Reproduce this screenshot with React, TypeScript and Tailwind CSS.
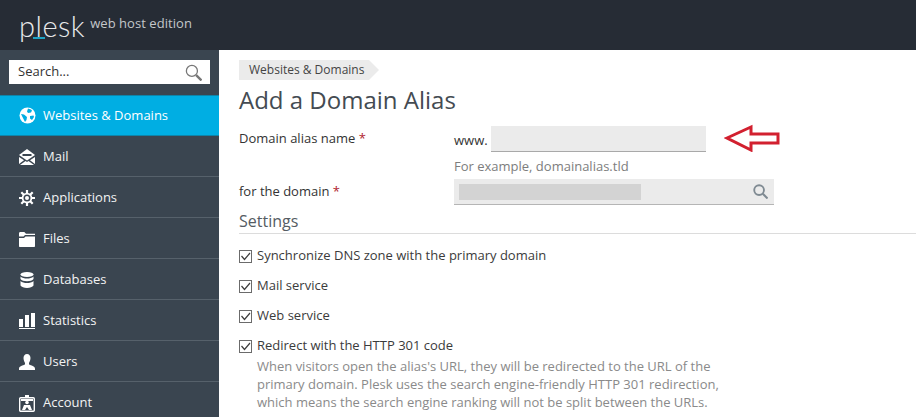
import type { ReactNode } from "react";

const Globe = () => (
  <svg width="17" height="17" viewBox="0 0 17 17">
    <circle cx="8.500" cy="8.500" r="8" fill="#fff" />
    <path d="M9 1.500c2 .5 3 1 4 2l-1 2-3 .5-1-1.500zM2 7l3 .5 3 2.500-.5 3-1.500 2-1.500-3zM11 9l3.500-.5.5 1.500-2 3-2-1.500z" fill="#00aee3" />
  </svg>
);

const MailIcon = () => (
  <svg width="16" height="16" viewBox="0 0 16 16" fill="#fff">
    <path d="M0 6 8 0l8 6-8 5.500z" />
    <path d="M0 8v7l5-3.800zM16 8v7l-5-3.800zM1 16l5.500-4L8 13l1.500-1L15 16z" />
    <path d="M3.500 5h9v2h-9z" fill="#3a4550" />
  </svg>
);

const GearIcon = () => (
  <svg width="16" height="16" viewBox="0 0 16 16">
    <g stroke="#fff" strokeWidth="2.200">
      <path d="M8 0v16M0 8h16M2.300 2.300l11.400 11.400M13.700 2.300 2.300 13.700" />
    </g>
    <circle cx="8" cy="8" r="5.300" fill="#fff" />
    <circle cx="8" cy="8" r="3.500" fill="#3a4550" />
    <circle cx="8" cy="8" r="2" fill="#fff" />
  </svg>
);

const FilesIcon = () => (
  <svg width="16" height="15" viewBox="0 0 16 15" fill="#fff">
    <path d="M0 1.500C0 .7.500 0 1.300 0h4L7 1.800h9V3H6L4.500 4.500H0z" />
    <path d="M0 6h5l1.500-1.500H16V14c0 .6-.4 1-1 1H1c-.6 0-1-.4-1-1z" />
  </svg>
);

const DbIcon = () => (
  <svg width="14" height="16" viewBox="0 0 14 16" fill="#fff">
    <ellipse cx="7" cy="2.500" rx="6.500" ry="2.500" />
    <path d="M.5 4.500C2 6 4.500 6.500 7 6.500s5-.5 6.500-2V7c-1 1.500-3.500 2.200-6.500 2.200S1.500 8.500.5 7z" />
    <path d="M.5 9C2 10.500 4.500 11 7 11s5-.5 6.500-2v4.500C12.500 15 10 16 7 16s-5.500-1-6.500-2.500z" />
  </svg>
);

const StatsIcon = () => (
  <svg width="16" height="16" viewBox="0 0 16 16" fill="#fff">
    <path d="M0 6h4v8H0zM6 2h4v12H6zM12 0h4v14h-4zM0 15h16v1H0z" />
  </svg>
);

const UserIcon = () => (
  <svg width="16" height="16" viewBox="0 0 16 16" fill="#fff">
    <path d="M8 0c2.200 0 3.500 1.700 3.500 4S10.500 8 10 9v1.500c2 1 6 1.500 6 4.200V16H0v-1.300c0-2.700 4-3.200 6-4.200V9C5.500 8 4.500 6.300 4.500 4S5.800 0 8 0z" />
  </svg>
);

const AccountIcon = () => (
  <svg width="16" height="17" viewBox="0 0 16 17">
    <path d="M6 0h4v2.500H6z" fill="#fff" />
    <rect x=".7" y="2.700" width="14.600" height="13.600" rx="1" fill="none" stroke="#fff" strokeWidth="1.400" />
    <path d="M2 4h12v2H2z" fill="#fff" />
    <circle cx="8" cy="7.500" r="1.800" fill="#fff" />
    <path d="M3 15l2-5h6l2 5h-3l-2-3-2 3z" fill="#fff" />
  </svg>
);

const SearchGlass = ({ color, size, weight }: { color: string; size: number; weight: number }) => (
  <svg width={size} height={size} viewBox="0 0 16 16" fill="none" stroke={color}>
    <circle cx="6.500" cy="6.500" r="5.200" strokeWidth={weight} />
    <path d="m10.500 10.500 5 5" strokeWidth="2.200" />
  </svg>
);

const CheckBox = () => (
  <span className="flex h-[13px] w-[13px] shrink-0 items-center justify-center border border-[#6b6b6b] bg-white">
    <svg width="11" height="9" viewBox="0 0 11 9" fill="none" stroke="#3c3c3c" strokeWidth="1.200">
      <path d="m1.500 4 3 3.500 5.500-6.500" />
    </svg>
  </span>
);

const navItems: { label: string; icon: ReactNode }[] = [
  { label: "Mail", icon: <MailIcon /> },
  { label: "Applications", icon: <GearIcon /> },
  { label: "Files", icon: <FilesIcon /> },
  { label: "Databases", icon: <DbIcon /> },
  { label: "Statistics", icon: <StatsIcon /> },
  { label: "Users", icon: <UserIcon /> },
  { label: "Account", icon: <AccountIcon /> },
];

const Check = ({ label }: { label: string }) => (
  <div className="flex h-[30px] items-center gap-[5px] text-[13px] text-[#3b3b3b]">
    <CheckBox />
    <span>{label}</span>
  </div>
);

const App = () => {
  return (
    <div className="flex h-[417px] w-[916px] flex-col overflow-hidden bg-white font-['Open_Sans',sans-serif]">
      <header className="flex h-[50px] shrink-0 items-center bg-[#262c35] pl-[19px]">
        <div className="relative font-['Lato',sans-serif] text-[29px] leading-none font-light tracking-[0.5px] text-[#e8e9ea]">
          plesk
          <span className="absolute top-[26px] left-[14px] h-[2px] w-[12px] bg-[#1fa3c4]" />
        </div>
        <span className="mt-[-2px] ml-[5px] text-[13px] tracking-[0.05px] text-[#c4c7ca]">web host edition</span>
      </header>
      <div className="flex min-h-0 flex-1">
        <aside className="w-[219px] shrink-0 bg-[#3a4550]">
          <div className="h-[45px] px-[9px] pt-[10px]">
            <div className="flex h-6 items-center justify-between bg-white pr-[8px] pl-[9px] text-[13px] text-[#333]">
              <span>Search...</span>
              <SearchGlass color="#777" size={17} weight={1.200} />
            </div>
          </div>
          <div className="flex h-[41px] items-center gap-[7px] border-y border-y-[#0e84a9] bg-[#00aee3] pl-[19px] text-[13px] text-white">
            <Globe />
            <span>Websites &amp; Domains</span>
          </div>
          {navItems.map((item) => (
            <div key={item.label} className="flex h-[41px] items-center gap-[8px] border-b border-b-[#56616b] pt-[2px] pl-[19px] text-[13px] text-[#f2f3f3]">
              <span className="flex w-4 justify-center">{item.icon}</span>
              <span>{item.label}</span>
            </div>
          ))}
        </aside>
        <main className="min-w-0 flex-1 pt-[10px] pl-[20px]">
          <div className="flex h-5 w-fit items-center">
            <span className="flex h-5 items-center bg-[#ebebeb] pr-[5px] pl-[10px] text-[12px] text-[#444]">Websites &amp; Domains</span>
            <span className="h-0 w-0 border-y-[10px] border-l-[10px] border-y-transparent border-l-[#ebebeb]" />
          </div>
          <h1 className="mt-[4px] text-[24px] leading-[32px] text-[#444b52]">Add a Domain Alias</h1>
          <div className="mt-[10px] flex h-[27px] text-[13px] text-[#333]">
            <span className="w-[215px] pt-[3px]">
              Domain alias name <span className="text-[#b01c2e]">*</span>
            </span>
            <span className="mt-[5px] mr-[3px]">www.</span>
            <span className="h-[26px] w-[215px] border-b border-b-[#a9a9a9] bg-[#ebebeb]" />
            <svg className="mt-[-2px] ml-[18px]" width="56" height="28" viewBox="0 0 56 28" fill="none" stroke="#d2202f" strokeWidth="3">
              <path d="M3 14 27 3v7h27v9H27v7z" />
            </svg>
          </div>
          <div className="mt-[4px] pl-[215px] text-[13px] leading-[18px] text-[#7d7d7d]">For example, domainalias.tld</div>
          <div className="mt-[4px] flex h-[26px] text-[13px] text-[#333]">
            <span className="w-[215px] pt-[3px]">
              for the domain <span className="text-[#b01c2e]">*</span>
            </span>
            <div className="flex h-[26px] w-[320px] items-center justify-between border-b border-b-[#b5b5b5] bg-[#ebebeb] pr-[6px] pl-[5px]">
              <span className="h-4 w-[182px] bg-[#d3d3d3]" />
              <SearchGlass color="#7f8a92" size={15} weight={2} />
            </div>
          </div>
          <div className="mt-[5px] border-b border-b-[#dcdcdc] pb-[1px] text-[16px] leading-[22px] text-[#555c63]">Settings</div>
          <div className="mt-[7px]">
            <Check label="Synchronize DNS zone with the primary domain" />
            <Check label="Mail service" />
            <Check label="Web service" />
            <Check label="Redirect with the HTTP 301 code" />
            <p className="mt-[-4px] w-[480px] pl-[18px] text-[13px] leading-[18px] text-[#8a8a8a]">
              When visitors open the alias's URL, they will be redirected to the URL of the primary domain. Plesk uses the search engine-friendly HTTP 301 redirection, which means the search engine ranking will not be split between the URLs.
            </p>
          </div>
        </main>
      </div>
    </div>
  );
};

export default App;
